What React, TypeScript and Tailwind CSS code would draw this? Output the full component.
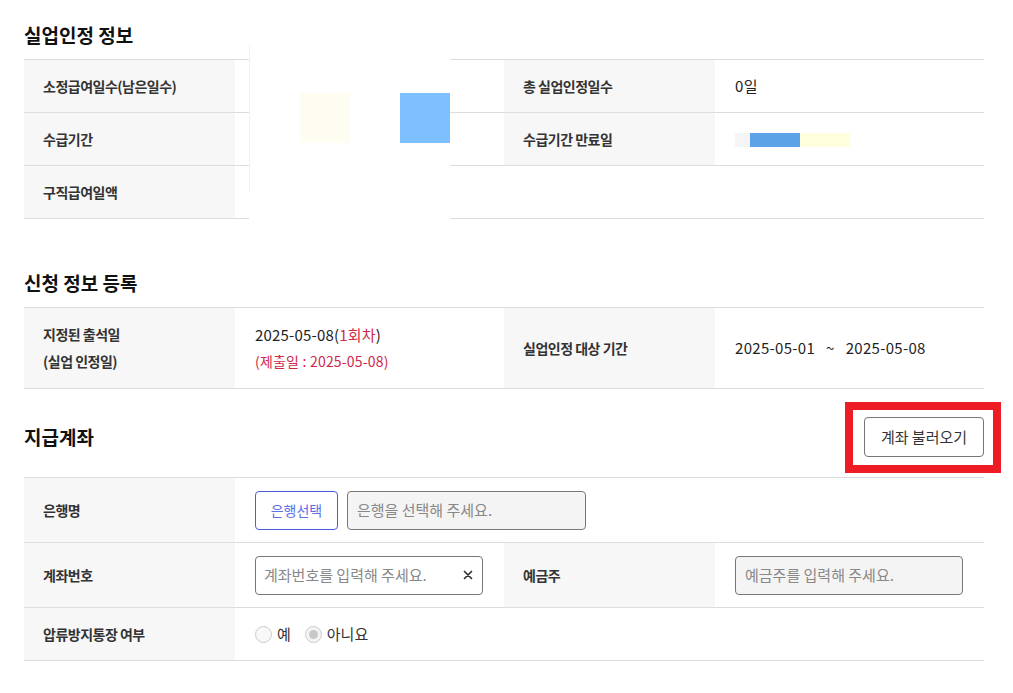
import React from "react";

const font = { fontFamily: '"Noto Sans CJK KR", "Noto Sans", sans-serif' };

function Label({ children, className = "" }: { children: React.ReactNode; className?: string }) {
  return (
    <div className={`w-[211px] shrink-0 bg-[#f7f7f7] pl-[19px] flex flex-col justify-center text-[14px] font-semibold text-[#333] tracking-[-0.5px] ${className}`}>
      {children}
    </div>
  );
}

function Value({ children, className = "" }: { children?: React.ReactNode; className?: string }) {
  return (
    <div className={`w-[269px] shrink-0 pl-[20px] flex items-center text-[15px] text-[#222] tracking-[0.3px] ${className}`}>
      {children}
    </div>
  );
}

function Title({ children }: { children: React.ReactNode }) {
  return <h2 className="h-[28px] leading-[28px] text-[19px] font-bold text-[#111] tracking-[0px]">{children}</h2>;
}

export default function App() {
  return (
    <div style={font} className="w-[1013px] min-h-[693px] bg-white pl-6 pr-[29px] pt-[21px]">
      {/* Section 1 */}
      <Title>실업인정 정보</Title>
      <div className="relative mt-[10px] border-t border-[#ddd]">
        <div className="flex h-[53px] border-b border-[#ddd]">
          <Label>소정급여일수(남은일수)</Label>
          <Value />
          <Label>총 실업인정일수</Label>
          <Value>0일</Value>
        </div>
        <div className="flex h-[53px] border-b border-[#ddd]">
          <Label>수급기간</Label>
          <Value />
          <Label>수급기간 만료일</Label>
          <Value>
            <div className="flex h-[14px] mt-[2px]">
              <div className="w-[15px] bg-[#f5f5f5]" />
              <div className="w-[50px] bg-[#5ba3e6]" />
              <div className="w-[50px] bg-[#ffffdd]" />
            </div>
          </Value>
        </div>
        <div className="flex h-[53px] border-b border-[#ddd]">
          <Label>구직급여일액</Label>
          <Value />
        </div>
        {/* redaction overlay */}
        <div className="absolute left-[225px] top-[-14px] w-[201px] h-[175px] bg-white">
          <div className="absolute left-0 top-0 w-px h-[147px] bg-[#f2f2f2]" />
          <div className="absolute left-[51px] top-[47px] w-[50px] h-[50px] bg-[#fffcf2]" />
          <div className="absolute left-[151px] top-[47px] w-[50px] h-[50px] bg-[#7dbfff]" />
        </div>
      </div>

      {/* Section 2 */}
      <div className="mt-[50px]">
        <Title>신청 정보 등록</Title>
        <div className="mt-[10px] border-t border-[#ddd]">
          <div className="flex h-[81px] border-b border-[#ddd]">
            <Label className="leading-[27px]">
              <span>지정된 출석일</span>
              <span>(실업 인정일)</span>
            </Label>
            <div className="w-[269px] shrink-0 pl-[20px] flex flex-col justify-center leading-[27px] tracking-[0.2px]">
              <span className="text-[15px] text-[#222]">
                2025-05-08(<span className="text-[#d0284c]">1회차</span>)
              </span>
              <span className="text-[14px] text-[#d0284c]">(제출일 : 2025-05-08)</span>
            </div>
            <Label>실업인정 대상 기간</Label>
            <Value>
              <span>2025-05-01</span>
              <span className="mx-[11px]">~</span>
              <span>2025-05-08</span>
            </Value>
          </div>
        </div>
      </div>

      {/* Section 3 */}
      <div className="flex items-center justify-between pt-[28px] pb-[20px]">
        <Title>지급계좌</Title>
        <div className="relative">
          <button className="w-[120px] h-[40px] border border-[#777] rounded-[4px] bg-white text-[15px] text-[#333]">
            계좌 불러오기
          </button>
          <div className="absolute left-[-19px] top-[-15px] right-[-17px] bottom-[-16px] border-8 border-[#ee1c25] pointer-events-none" />
        </div>
      </div>
      <div className="border-t border-[#ddd]">
        <div className="flex h-[65px] border-b border-[#ddd]">
          <Label>은행명</Label>
          <div className="flex items-center pl-[20px] gap-[9px]">
            <button className="w-[83px] h-[39px] border border-[#4a5fe0] rounded-[4px] bg-white text-[14px] text-[#5b6ee8]">
              은행선택
            </button>
            <div className="w-[239px] h-[39px] border border-[#777] rounded-[4px] bg-[#f4f4f4] flex items-center pl-[9px] text-[15px] text-[#888]">
              은행을 선택해 주세요.
            </div>
          </div>
        </div>
        <div className="flex h-[65px] border-b border-[#ddd]">
          <Label>계좌번호</Label>
          <Value>
            <div className="w-[228px] h-[39px] border border-[#777] rounded-[4px] bg-white flex items-center justify-between pl-[8px] pr-[8px] text-[15px] text-[#888] tracking-[0px]">
              <span>계좌번호를 입력해 주세요.</span>
              <svg width="10" height="10" viewBox="0 0 10 10" className="mr-[1px]">
                <path d="M1.5 1.5 L8.5 8.5 M8.5 1.5 L1.5 8.5" stroke="#333" strokeWidth="1.7" strokeLinecap="round" />
              </svg>
            </div>
          </Value>
          <Label>예금주</Label>
          <Value>
            <div className="w-[228px] h-[39px] border border-[#777] rounded-[4px] bg-[#f4f4f4] flex items-center pl-[9px] text-[15px] text-[#888] tracking-[0px]">
              예금주를 입력해 주세요.
            </div>
          </Value>
        </div>
        <div className="flex h-[53px] border-b border-[#ddd]">
          <Label>압류방지통장 여부</Label>
          <div className="flex items-center pl-[20px] text-[15px] text-[#333]">
            <span className="w-[17px] h-[17px] rounded-full border border-[#ccc] bg-[#f8f8f8]" />
            <span className="ml-[5px]">예</span>
            <span className="ml-[14px] w-[17px] h-[17px] rounded-full border border-[#ccc] bg-[#f4f4f4] flex items-center justify-center">
              <span className="w-[9px] h-[9px] rounded-full bg-[#c8c8c8]" />
            </span>
            <span className="ml-[5px]">아니요</span>
          </div>
        </div>
      </div>
    </div>
  );
}
